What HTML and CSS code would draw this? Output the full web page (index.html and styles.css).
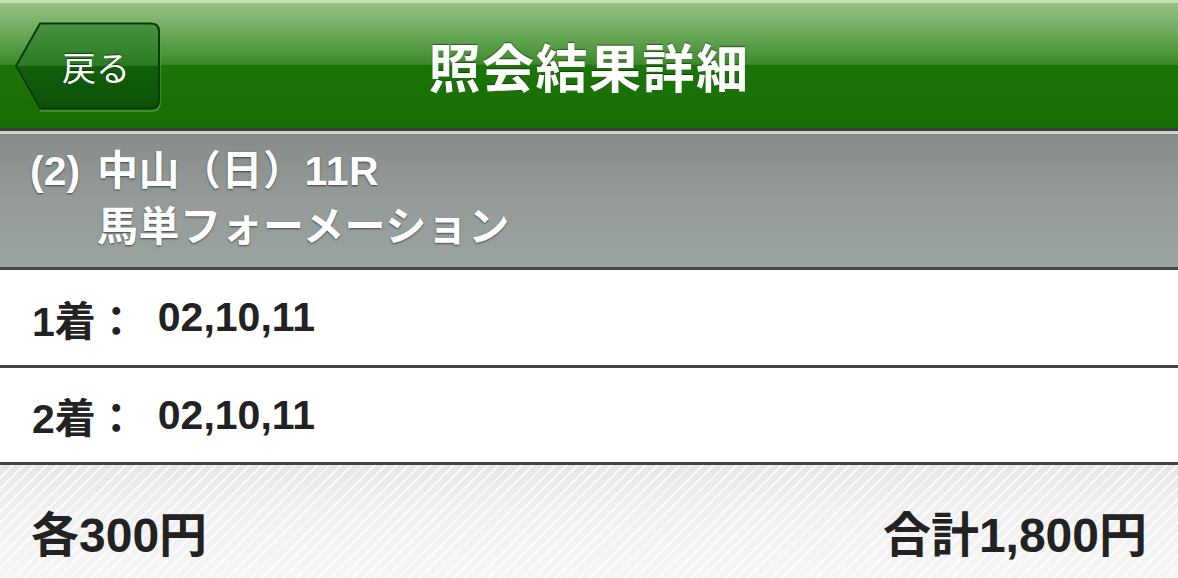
FILE: index.html
```html
<!DOCTYPE html>
<html lang="ja">
<head>
<meta charset="utf-8">
<title>照会結果詳細</title>
<link rel="stylesheet" href="styles.css">
</head>
<body>
<header class="navbar">
  <div class="nav-side">
    <a class="back-btn" href="#">
      <svg class="back-shape" width="148" height="90" viewBox="0 0 148 90" aria-hidden="true">
        <defs>
          <linearGradient id="btnFill" x1="0" y1="0" x2="0" y2="1">
            <stop offset="0" stop-color="#479440"/>
            <stop offset="0.5" stop-color="#2a7a22"/>
            <stop offset="0.5" stop-color="#10600a"/>
            <stop offset="1" stop-color="#0b5006"/>
          </linearGradient>
        </defs>
        <path d="M2.5 46 L27 3 H138 Q146 3 146 11 V81 Q146 89 138 89 H27 Z" fill="none" stroke="#5fa64f" stroke-width="1.5" opacity="0.7"/>
        <path d="M2 44 L26 1.5 H137 Q145 1.5 145 9.5 V78.5 Q145 86.5 137 86.5 H26 Z" fill="url(#btnFill)" stroke="#0a3a05" stroke-width="2"/>
      </svg>
      <span class="back-label">戻る</span>
    </a>
  </div>
  <h1 class="title">照会結果詳細</h1>
  <div class="nav-side"></div>
</header>

<section class="race">
  <div class="race-no">(2)</div>
  <div class="race-info">
    <div class="race-line">中山（日）11R</div>
    <div class="race-line">馬単フォーメーション</div>
  </div>
</section>

<ul class="picks">
  <li class="pick-row"><span class="pick-label">1着：</span><span class="pick-nums">02,10,11</span></li>
  <li class="pick-row"><span class="pick-label">2着：</span><span class="pick-nums">02,10,11</span></li>
</ul>

<footer class="summary">
  <div class="amount">各300円</div>
  <div class="amount">合計1,800円</div>
</footer>
</body>
</html>
```

FILE: styles.css
```css
* { box-sizing: border-box; }

html, body {
  margin: 0;
  padding: 0;
  background: #f4f4f4;
  font-family: "Liberation Sans", "Noto Sans CJK JP", sans-serif;
}

.navbar {
  display: grid;
  grid-template-columns: 1fr auto 1fr;
  align-items: center;
  height: 131px;
  border-top: 3px solid #c3e2b6;
  border-bottom: 3px solid #3d3f3d;
  background: linear-gradient(to bottom, #92c184 0%, #6aa858 25%, #3d8a2a 49%, #1b7506 50%, #196d06 100%);
}

.nav-side { display: flex; align-items: center; }

.back-btn {
  position: relative;
  display: flex;
  align-items: center;
  justify-content: center;
  width: 148px;
  height: 90px;
  margin-left: 14px;
  margin-top: 2px;
  text-decoration: none;
}

.back-shape {
  position: absolute;
  left: 0;
  top: 0;
}

.back-label {
  position: relative;
  margin-left: 16px;
  color: #fff;
  font-family: "Noto Sans CJK JP", sans-serif;
  font-weight: 400;
  font-size: 34px;
  text-shadow: 0 -1px 1px rgba(0, 0, 0, 0.5);
}

.title {
  margin: 0;
  color: #fff;
  font-family: "Noto Sans CJK JP", sans-serif;
  font-weight: 700;
  font-size: 52px;
  line-height: 1;
  letter-spacing: 1.5px;
  text-shadow: 0 -1px 1px rgba(0, 0, 0, 0.45);
}

.race {
  display: grid;
  grid-template-columns: auto 1fr;
  column-gap: 17px;
  padding: 9px 0 10px 30px;
  height: 136px;
  border-top: 3px solid #cdd5d4;
  background: linear-gradient(to bottom, #888c89 0%, #949b98 50%, #9ba4a1 100%);
  color: #fff;
  font-weight: 700;
  font-size: 41px;
  line-height: 56px;
  text-shadow: 0 1px 2px rgba(0, 0, 0, 0.55);
}

.race-info { letter-spacing: 0.5px; }

.picks {
  list-style: none;
  margin: 0;
  padding: 0;
  border-top: 3px solid #444;
  background: #fff;
}

.pick-row {
  display: flex;
  align-items: center;
  gap: 21px;
  height: 98px;
  padding-left: 32px;
  border-bottom: 3px solid #444;
  color: #222;
  font-weight: 700;
  font-size: 41px;
}

.pick-row + .pick-row { height: 97px; }

.summary {
  display: flex;
  justify-content: space-between;
  align-items: center;
  height: 113px;
  padding: 18px 31px 0 31px;
  background:
    repeating-linear-gradient(135deg, rgba(255,255,255,0.75) 0 2px, rgba(255,255,255,0) 2px 8px),
    linear-gradient(to bottom, #e6e6e6 0%, #f0f0f0 40%, #f5f5f5 100%);
  color: #222;
  font-weight: 700;
  font-size: 48px;
}
```
